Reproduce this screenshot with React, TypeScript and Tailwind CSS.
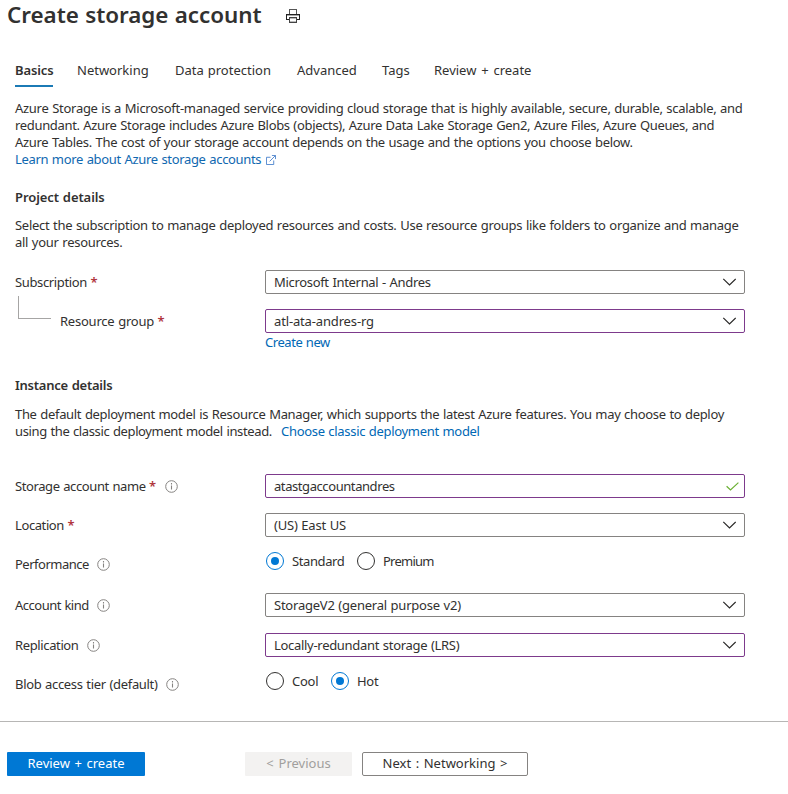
import type { ReactNode } from "react";

const InfoIcon = () => (
  <svg width="13" height="13" viewBox="0 0 13 13" fill="none" stroke="#858381" className="-ml-[0.5px] shrink-0">
    <circle cx="6.5" cy="6.5" r="5.8" />
    <path d="M6.5 5.5V9.6M6.5 3V4.4" strokeWidth="1.1" />
  </svg>
);

const Chevron = () => (
  <svg width="14" height="8" viewBox="0 0 14 8" fill="none" stroke="#292827" strokeWidth="1.2" className="shrink-0">
    <path d="M1.3 0.9L7.5 7L13.7 0.9" />
  </svg>
);

const Check = () => (
  <svg width="13" height="9" viewBox="0 0 13 9" fill="none" stroke="#6bb033" strokeWidth="1.2" className="-mr-[3px] shrink-0">
    <path d="M0.6 4.2L4.5 8L12.4 0.6" />
  </svg>
);

const Printer = () => (
  <svg width="14" height="14" viewBox="0 0 14 14" fill="none" shapeRendering="crispEdges">
    <path d="M3.5 5V0.5H10.5V5" stroke="#555" />
    <path d="M3 10.5H0.5V5.5H13.5V10.5H11" stroke="#222" />
    <path d="M1 6.5H13" stroke="#aaa" />
    <path d="M3.5 8.5H10.5V13.5H3.5Z" stroke="#444" />
    <path d="M4 9.5H10M4 12.5H10" stroke="#bbb" />
  </svg>
);

const External = () => (
  <svg width="10" height="10" viewBox="0 0 11 11" fill="none" stroke="#4a82cc" className="ml-[5px] inline-block align-[-1px]">
    <path d="M5 2.5H0.5V10.5H8.5V6" />
    <path d="M6.5 0.5H10.5V4.5M10.3 0.7L4 7" />
  </svg>
);

const Star = () => <span className="ml-[3.5px] font-semibold tracking-normal text-[#b0363c]">*</span>;

function Label({ children, required, info, className = "" }: { children: ReactNode; required?: boolean; info?: boolean; className?: string }) {
  return (
    <div className={`flex w-[250px] shrink-0 items-center ${className}`}>
      <span>{children}</span>
      {required && <Star />}
      {info && <span className="ml-[9px]"><InfoIcon /></span>}
    </div>
  );
}

function Field({ children, edited, valid, className = "" }: { children: ReactNode; edited?: boolean; valid?: boolean; className?: string }) {
  return (
    <div className={`flex h-6 w-[480px] items-center justify-between rounded-[2px] border px-[8px] ${edited ? "border-[#7d3a8c]" : "border-[#858381]"}`}>
      <span className={className}>{children}</span>
      {valid ? <Check /> : <Chevron />}
    </div>
  );
}

function Radio({ children, checked, className = "" }: { children: ReactNode; checked?: boolean; className?: string }) {
  return (
    <div className={`flex items-center ${className}`}>
      <span className={`mr-[8px] flex size-[18px] items-center justify-center rounded-full border ${checked ? "border-[#0078d4]" : "border-[#323130]"}`}>
        {checked && <span className="size-2 rounded-full bg-[#0078d4]" />}
      </span>
      {children}
    </div>
  );
}

export default function App() {
  return (
    <main className="h-[794px] w-[788px] overflow-hidden whitespace-nowrap bg-white font-['Noto_Sans',sans-serif] text-[13px] leading-[17px] text-[#323130] [word-spacing:0.6px]">
      <header className="flex h-8 items-center pl-[7px]">
        <h1 className="w-[279px] pb-[2px] text-[22.4px] font-semibold leading-8 tracking-[-0.03px]">Create storage account</h1>
        <Printer />
      </header>

      <nav className="mt-[30px] flex h-[25px] pl-[15px]">
        <div className="mr-[24px] w-[38px] border-b-2 border-[#1b7ab5] font-semibold tracking-[-0.1px]">Basics</div>
        <div className="w-[98px]">Networking</div>
        <div className="w-[122px]">Data protection</div>
        <div className="w-[85px]">Advanced</div>
        <div className="w-[52px]">Tags</div>
        <div className="[word-spacing:1.4px]">Review + create</div>
      </nav>

      <div className="pl-[15px]">
        <section className="pt-[13px]">
          <p className="tracking-[-0.28px]">Azure Storage is a Microsoft-managed service providing cloud storage that is highly available, secure, durable, scalable, and</p>
          <p className="tracking-[-0.33px]">redundant. Azure Storage includes Azure Blobs (objects), Azure Data Lake Storage Gen2, Azure Files, Azure Queues, and</p>
          <p className="tracking-[-0.3px]">Azure Tables. The cost of your storage account depends on the usage and the options you choose below.</p>
          <p className="tracking-[-0.33px] text-[#1068b0]"><a>Learn more about Azure storage accounts</a><External /></p>
        </section>

        <section className="pt-[21px]">
          <h2 className="font-semibold tracking-[-0.08px]">Project details</h2>
          <p className="mt-[11px] tracking-[-0.29px]">Select the subscription to manage deployed resources and costs. Use resource groups like folders to organize and manage</p>
          <p className="tracking-[-0.28px]">all your resources.</p>
          <div className="mt-[19px] flex items-center">
            <Label required className="tracking-[-0.36px]">Subscription</Label>
            <Field className="tracking-[-0.32px]">Microsoft Internal - Andres</Field>
          </div>
          <div className="flex h-[39px] items-end">
            <div className="ml-[3px] mr-[9px] mt-[2px] h-[23px] w-[33px] self-start border-b border-l border-[#a6a5a4]" />
            <Label required className="!w-[205px] h-6 tracking-[-0.23px]">Resource group</Label>
            <Field edited className="tracking-[-0.15px]">atl-ata-andres-rg</Field>
          </div>
          <p className="mt-px pl-[250px] tracking-[-0.45px] text-[#0068b5]">Create new</p>
        </section>

        <section className="pt-[26px]">
          <h2 className="font-semibold tracking-[-0.24px]">Instance details</h2>
          <p className="mt-[12px] tracking-[-0.32px]">The default deployment model is Resource Manager, which supports the latest Azure features. You may choose to deploy</p>
          <p className="flex"><span className="w-[266px] tracking-[-0.37px]">using the classic deployment model instead.</span><a className="tracking-[-0.31px] text-[#0068b5]">Choose classic deployment model</a></p>
          <div className="mt-[34px] flex items-center">
            <Label required info className="tracking-[-0.4px]">Storage account name</Label>
            <Field edited valid className="tracking-[-0.42px]">atastgaccountandres</Field>
          </div>
          <div className="mt-[15px] flex items-center">
            <Label required className="tracking-[-0.4px]">Location</Label>
            <Field className="tracking-[-0.22px]">(US) East US</Field>
          </div>
          <div className="mt-[15px] flex h-[18px] items-center">
            <Label info className="pt-[7px] tracking-[-0.5px]">Performance</Label>
            <Radio checked className="ml-px w-[91px] tracking-[-0.4px]">Standard</Radio>
            <Radio className="tracking-[-0.75px]">Premium</Radio>
          </div>
          <div className="mt-[23px] flex items-center">
            <Label info className="tracking-[-0.5px]">Account kind</Label>
            <Field className="tracking-[-0.23px]">StorageV2 (general purpose v2)</Field>
          </div>
          <div className="mt-[16px] flex items-center">
            <Label info className="tracking-[-0.37px]">Replication</Label>
            <Field edited className="tracking-[-0.3px]">Locally-redundant storage (LRS)</Field>
          </div>
          <div className="mt-[15px] flex h-[18px] items-center">
            <Label info className="pt-[7px] tracking-[-0.32px]">Blob access tier (default)</Label>
            <Radio className="ml-px w-[65px] tracking-[-0.25px]">Cool</Radio>
            <Radio checked className="tracking-[-0.3px]">Hot</Radio>
          </div>
        </section>
      </div>

      <footer className="mt-[31px] flex border-t border-[#b7b6b5] pl-[7px] pt-[30px]">
        <button className="h-6 w-[138px] rounded-[1px] bg-[#0078d4] pb-[2px] text-white [word-spacing:1.2px]">Review + create</button>
        <button className="ml-[100px] h-6 w-[107px] rounded-[1px] bg-[#f3f2f1] pb-[2px] text-[#a19f9d] [word-spacing:1.4px]">&lt; Previous</button>
        <button className="ml-[10px] h-6 w-[166px] rounded-[2px] border border-[#858381] pb-[2px] [word-spacing:1.2px]">Next : Networking &gt;</button>
      </footer>
    </main>
  );
}
